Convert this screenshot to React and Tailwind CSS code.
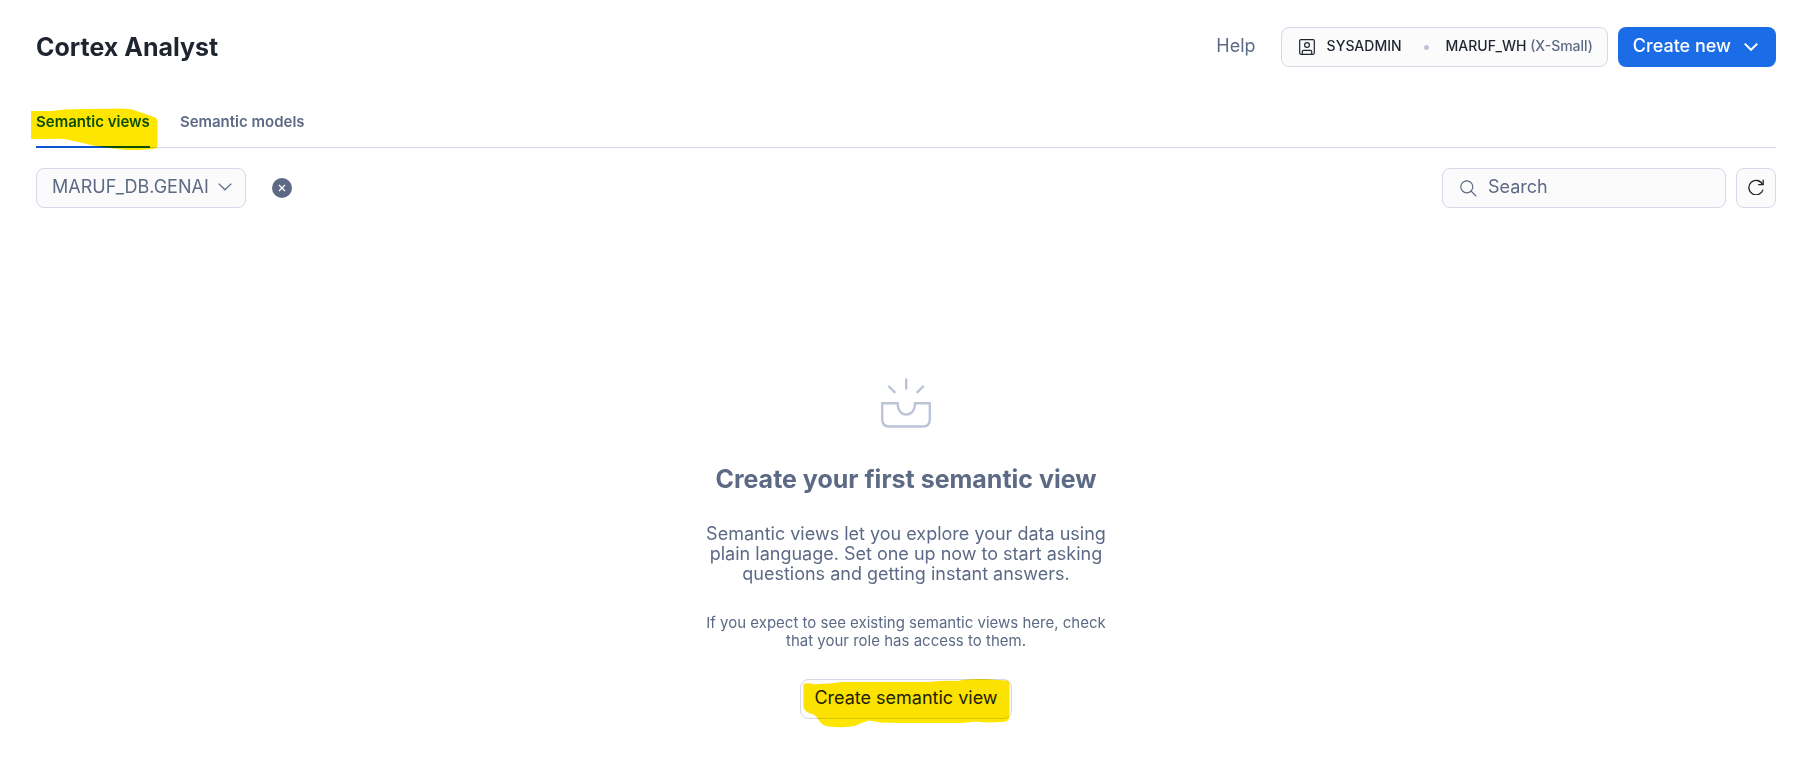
function ChevronDown({ className, strokeWidth }) {
  return (
    <svg className={className} width="16" height="16" viewBox="0 0 16 16" fill="none" stroke="currentColor" strokeWidth={strokeWidth} aria-hidden="true">
      <path d="M1.7 4.6 L8 10.8 L14.3 4.600" />
    </svg>
  );
}

function Header() {
  return (
    <header className="flex items-center justify-between">
      <h1 className="text-[25px] font-bold leading-10 text-[#1e252f]">Cortex Analyst</h1>
      <div className="flex items-center">
        <a href="#help" className="mr-[25px] pb-0.5 text-lg leading-5 text-[#5d6a85]">Help</a>
        <button type="button" className="mr-2.5 flex h-10 items-center rounded-lg border border-[#d5d9e6] bg-[#fbfbfb] pl-[15px] pr-[14px] text-sm font-medium text-[#1e252f]">
          <svg className="ml-0.5 mr-3" width="16" height="16" viewBox="0 0 16 16" fill="none" stroke="currentColor" strokeWidth="1.2" aria-hidden="true">
            <rect x="0.7" y="0.7" width="14.6" height="14.6" rx="1.2" />
            <circle cx="8" cy="6" r="2.4" />
            <path d="M3.3 15 V12.6 Q3.3 11.3 4.6 11.3 H11.4 Q12.7 11.3 12.7 12.6 V15" />
          </svg>
          <span className="pb-0.5">SYSADMIN</span>
          <span className="ml-[22px] mr-[17px] size-[5px] rounded-full bg-[#bdc4d5]" />
          <span className="pb-0.5">MARUF_WH <span className="text-[#5d6a85]">(X-Small)</span></span>
        </button>
        <button type="button" className="flex h-10 items-center gap-3 rounded-lg bg-[#1a6ce7] pl-[15px] pr-[17px] text-lg font-medium leading-5 text-white">
          <span className="pb-0.5">Create new</span>
          <ChevronDown strokeWidth="2" />
        </button>
      </div>
    </header>
  );
}

function Tabs() {
  return (
    <nav className="mt-[33px] flex gap-[30px] border-b border-[#d5d9e6] text-[15px] font-semibold leading-5">
      <a href="#views" className="relative -mb-px border-b-2 border-[#0b56d0] pb-[14px] pt-3 text-[#0b56d0]">
        Semantic views
        <svg className="pointer-events-none absolute -left-[5px] top-2 mix-blend-multiply" width="127" height="42" viewBox="0 0 127 42" aria-hidden="true">
          <path fill="#ffe600" d="M0 3 H21 Q33 1.2 50 1 L80 0.7 Q98 0 104 2.5 L123 9 Q126.5 10 126.5 14 V39 Q124 41.5 115 41.5 Q100 43 86 41 L62 37.5 Q40 32 32 31 Q25 30.5 20 31 H0 Z" />
        </svg>
      </a>
      <a href="#models" className="pt-3 text-[#5d6a85]">Semantic models</a>
    </nav>
  );
}

function Toolbar() {
  return (
    <div className="mt-5 flex items-center justify-between text-lg leading-5 text-[#5d6a85]">
      <div className="flex items-center gap-[26px]">
        <div className="relative">
          <select aria-label="Database and schema" className="block h-10 w-[210px] appearance-none rounded-lg border border-[#d5d9e6] bg-[#fbfbfb] pb-0.5 pl-[15px] pr-9">
            <option>MARUF_DB.GENAI</option>
          </select>
          <ChevronDown className="pointer-events-none absolute right-[13px] top-[11px]" strokeWidth="1.3" />
        </div>
        <button type="button" aria-label="Clear schema" className="flex size-5 items-center justify-center rounded-full bg-[#5d6a85] text-white">
          <svg width="8" height="8" viewBox="0 0 8 8" stroke="currentColor" strokeWidth="1.3" aria-hidden="true">
            <path d="M1 1 L7 7 M7 1 L1 7" />
          </svg>
        </button>
      </div>
      <div className="flex gap-2.5">
        <label className="flex h-10 w-[284px] items-center gap-[11px] rounded-lg border border-[#d5d9e6] bg-[#fbfbfb] px-[17px]">
          <svg className="shrink-0" width="17" height="17" viewBox="0 0 17 17" fill="none" stroke="currentColor" strokeWidth="1.2" aria-hidden="true">
            <circle cx="6.8" cy="6.8" r="6" />
            <path d="M11 11 L16.3 16.3" />
          </svg>
          <input type="text" placeholder="Search" aria-label="Search" className="w-full min-w-0 bg-transparent pb-0.5 outline-none placeholder:text-[#5d6a85]" />
        </label>
        <button type="button" aria-label="Refresh" className="flex size-10 items-center justify-center rounded-lg border border-[#d5d9e6] bg-[#fbfbfb] pb-0.5 text-[#1e252f]">
          <svg width="16" height="16" viewBox="0 0 16 16" fill="none" stroke="currentColor" strokeWidth="1.3" aria-hidden="true">
            <path d="M15 10.6 A7.2 7.2 0 1 1 14.5 5.3" />
            <path d="M15.2 0.8 V5.6 H10.2" />
          </svg>
        </button>
      </div>
    </div>
  );
}

function EmptyState() {
  return (
    <section className="mx-auto mt-[170px] flex max-w-[420px] flex-col items-center text-center text-[#5d6a85]">
      <svg width="50" height="50" viewBox="0 0 50 50" fill="none" stroke="#bdc4d9" strokeWidth="2.4" aria-hidden="true">
        <path d="M1.2 25.3 H16.7 V27 A8.6 9.5 0 0 0 33.9 27 V25.3 H48.8 V41 Q48.8 48.500 41.8 48.500 H8.2 Q1.2 48.500 1.2 41 Z" />
        <path d="M25.2 0.5 V11.5 M7.3 7.8 L14.3 14.8 M42.7 7.8 L35.7 14.8" />
      </svg>
      <h2 className="mt-[35px] text-[25px] font-bold leading-8">Create your first semantic view</h2>
      <p className="mt-[29px] max-w-[402px] text-lg leading-5">
        Semantic views let you explore your data using plain language. Set one up now to start asking questions and getting instant answers.
      </p>
      <p className="mt-[30px] text-[15px] leading-[18px]">
        If you expect to see existing semantic views here, check that your role has access to them.
      </p>
      <button type="button" className="relative mt-[29px] h-10 rounded-lg border border-[#d5d9e6] bg-[#fbfbfb] px-[13px] pb-0.5 text-lg leading-5 text-[#1e252f]">
        Create semantic view
        <svg className="pointer-events-none absolute -top-px left-0.5 mix-blend-multiply" width="207" height="49" viewBox="0 0 207 49" aria-hidden="true">
          <path fill="#ffe600" d="M0.5 4.5 H8 Q9 5.5 15 5 Q27 5 38 3 H80 L125 3 Q145 1 155 2 Q165 -0.5 185 0.2 L203 1.5 Q206.500 1.500 206.500 5 V38 Q206 43 198 43 Q185 44 172 42.500 Q160 44.500 145 44 H95 Q75 44 66 41.500 Q60 43 52 47 Q42 49 25 47.500 Q19 47 15 40 Q12 35 7 34.500 Q0.500 32 0.500 27 Z" />
        </svg>
      </button>
    </section>
  );
}

export default function App() {
  return (
    <main className="min-h-screen bg-white pb-8 pl-9 pr-[31px] pt-[27px] font-['Inter',sans-serif]">
      <Header />
      <Tabs />
      <Toolbar />
      <EmptyState />
    </main>
  );
}
